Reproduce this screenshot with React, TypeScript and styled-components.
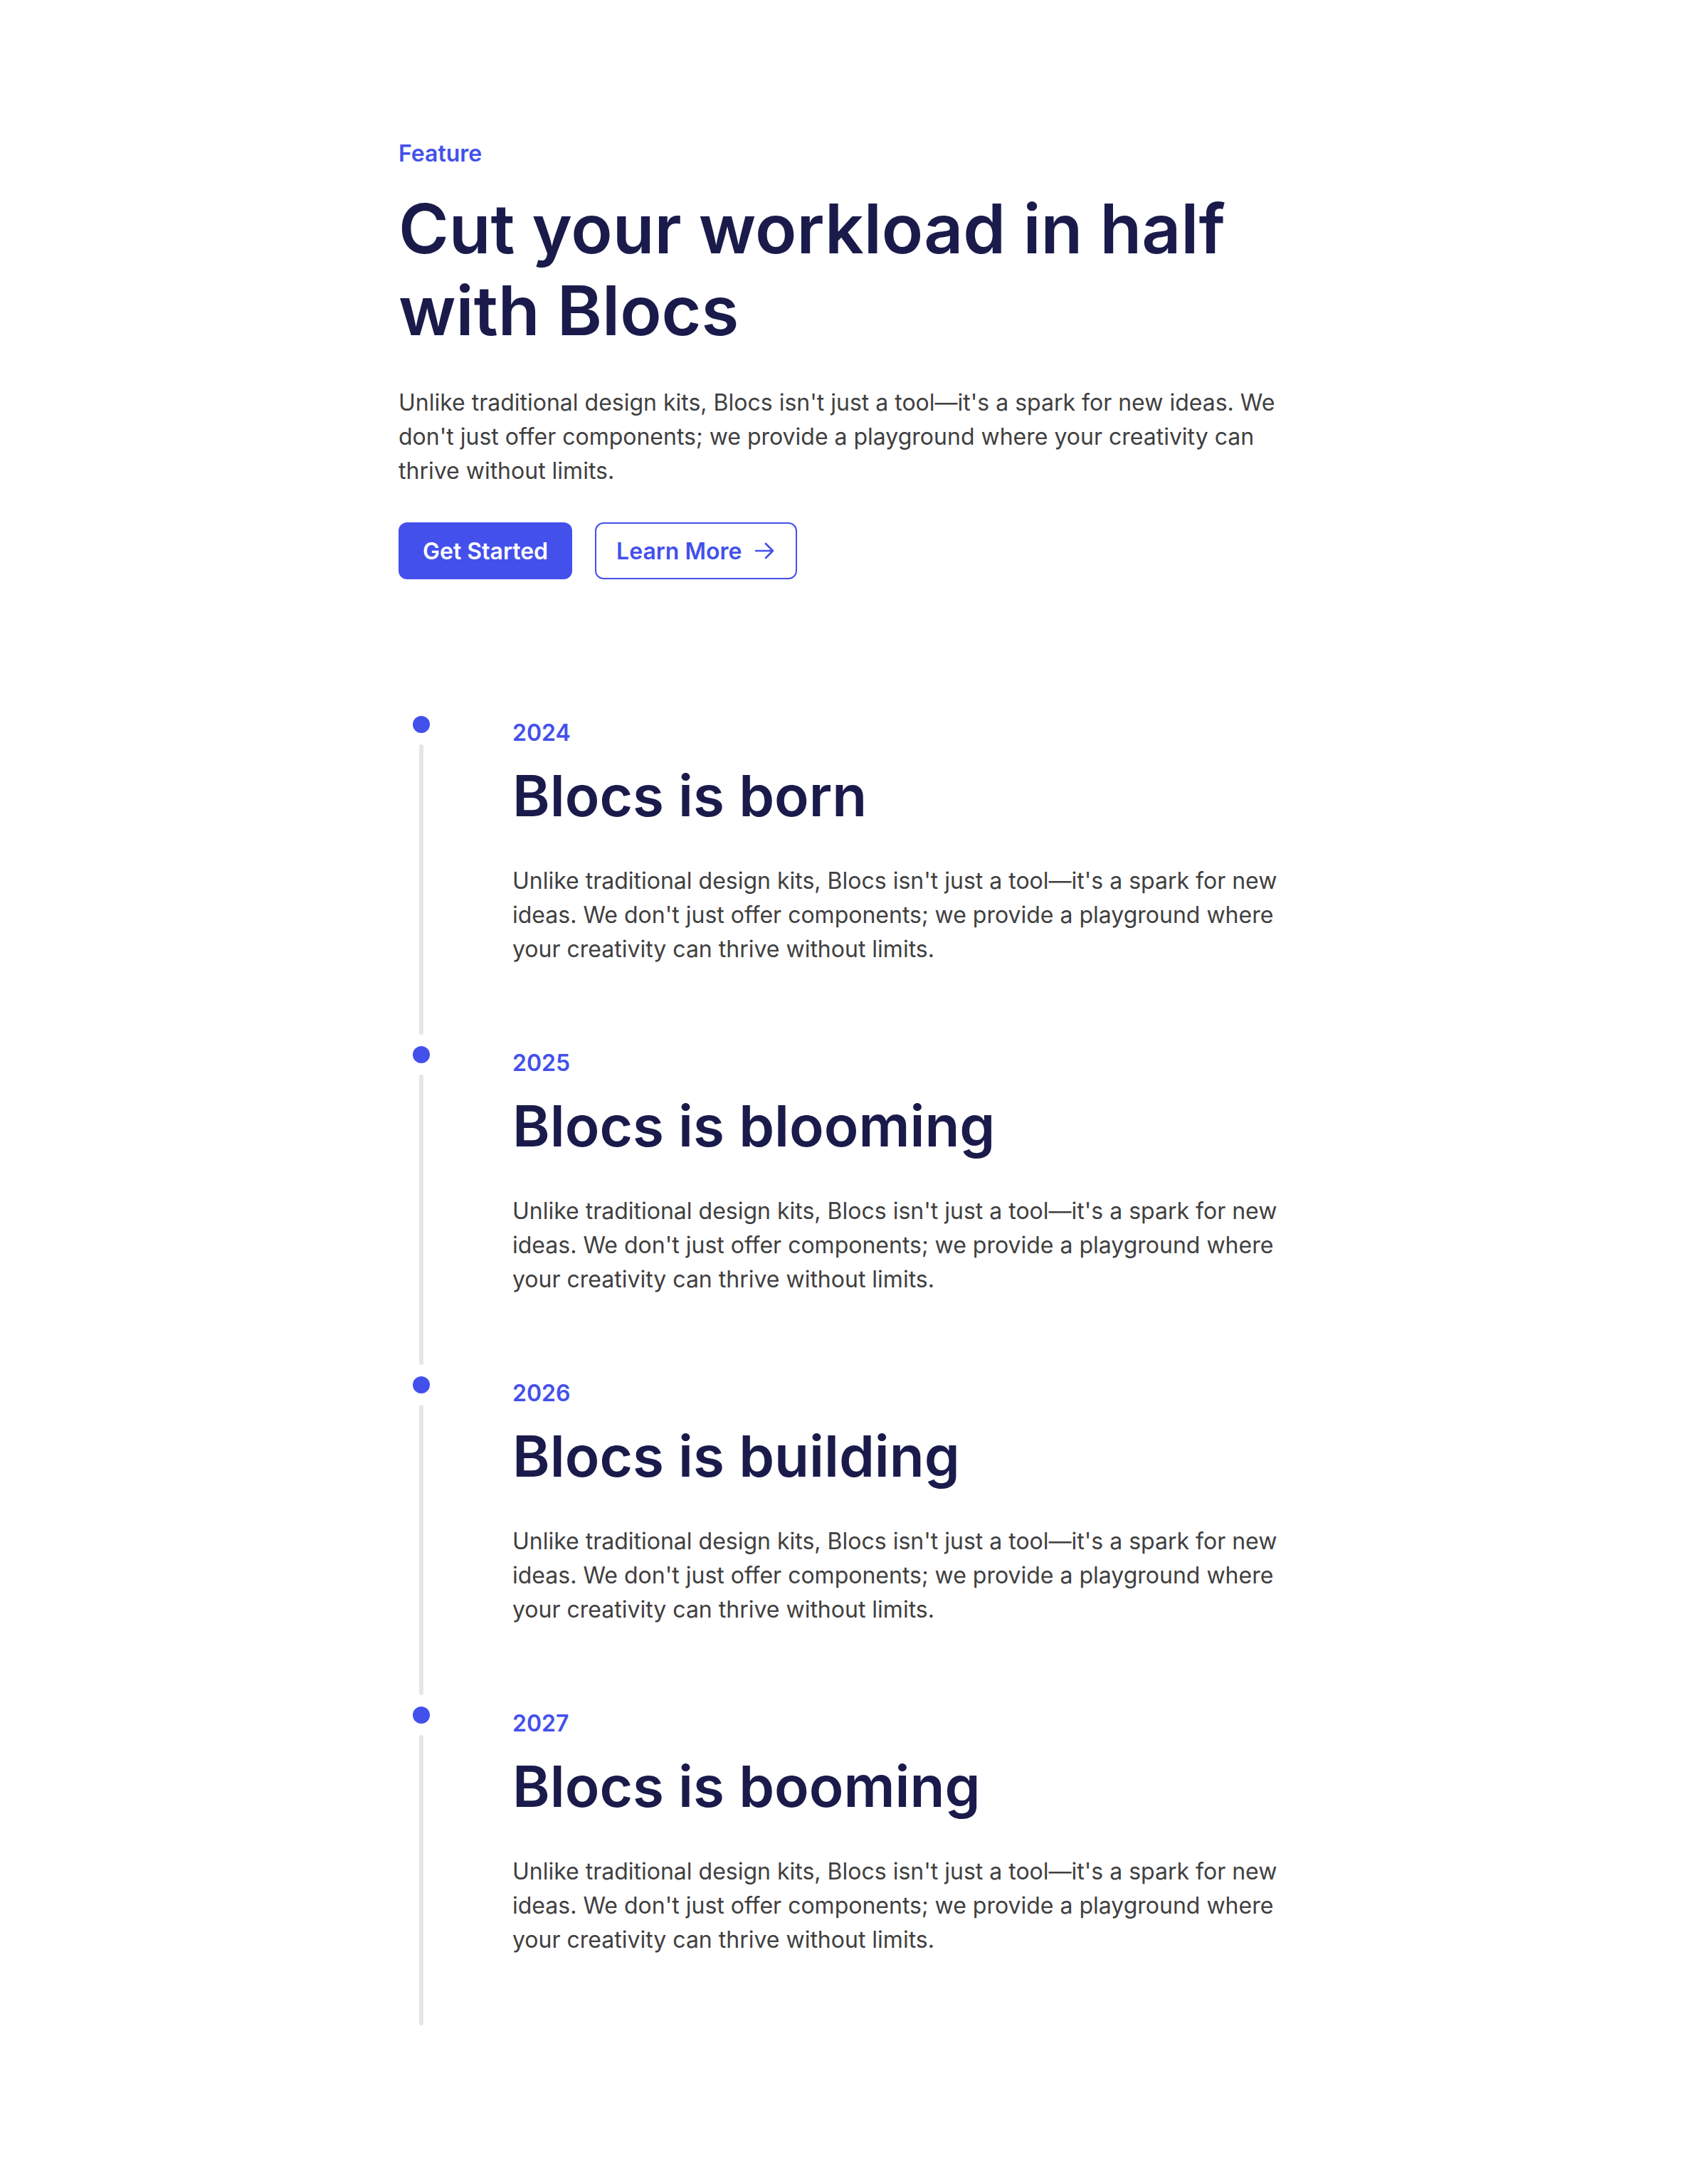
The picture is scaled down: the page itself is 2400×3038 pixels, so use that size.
import React from "react";
import styled, { createGlobalStyle } from "styled-components";

const GlobalStyle = createGlobalStyle`
  html, body {
    margin: 0;
    padding: 0;
    background: #ffffff;
  }
  body {
    font-family: Inter, "Noto Sans", "Liberation Sans", sans-serif;
    -webkit-font-smoothing: antialiased;
  }
  * { box-sizing: border-box; }
`;

const Page = styled.main`
  padding: 192px 0 176px;
`;

const Container = styled.div`
  width: 1280px;
  margin: 0 auto;
`;

const Hero = styled.section`
  display: flex;
  flex-direction: column;
  align-items: flex-start;
`;

const Eyebrow = styled.span`
  font-size: 32px;
  line-height: 48px;
  font-weight: 600;
  color: #4350eb;
`;

const Heading = styled.h1`
  margin: 24px 0 0;
  font-size: 96px;
  line-height: 1.2;
  font-weight: 600;
  color: #1a1b4b;
`;

const Lead = styled.p`
  margin: 48px 0 0;
  font-size: 32px;
  line-height: 48px;
  color: #404040;
`;

const Actions = styled.div`
  display: flex;
  gap: 32px;
  margin-top: 48px;
`;

const Button = styled.button<{ $variant?: "solid" | "outline" }>`
  display: inline-flex;
  align-items: center;
  gap: 16px;
  height: 80px;
  padding: 0 ${(p) => (p.$variant === "outline" ? "28px" : "34px")};
  border-radius: 12px;
  font-family: inherit;
  font-size: 32px;
  font-weight: 600;
  cursor: pointer;
  background: ${(p) => (p.$variant === "outline" ? "#ffffff" : "#4350eb")};
  color: ${(p) => (p.$variant === "outline" ? "#4350eb" : "#ffffff")};
  border: ${(p) => (p.$variant === "outline" ? "2px solid #4350eb" : "none")};
`;

const Timeline = styled.ol`
  list-style: none;
  margin: 192px 0 0;
  padding: 0;
`;

const Item = styled.li`
  display: flex;
  gap: 96px;
`;

const Rail = styled.div`
  width: 64px;
  flex-shrink: 0;
  display: flex;
  flex-direction: column;
  align-items: center;
  padding-bottom: 16px;
`;

const Dot = styled.span`
  width: 24px;
  height: 24px;
  border-radius: 50%;
  background: #4350eb;
`;

const Line = styled.span`
  flex: 1;
  width: 6px;
  margin-top: 16px;
  border-radius: 3px;
  background: #e6e6e6;
`;

const Content = styled.div`
  flex: 1;
  padding-bottom: 112px;
`;

const Year = styled.div`
  font-size: 32px;
  line-height: 48px;
  font-weight: 600;
  color: #4350eb;
`;

const Title = styled.h2`
  margin: 16px 0 0;
  font-size: 80px;
  line-height: 1.2;
  font-weight: 600;
  color: #1a1b4b;
`;

const Body = styled.p`
  margin: 48px 0 0;
  font-size: 32px;
  line-height: 48px;
  color: #404040;
`;

const ArrowRight = () => (
  <svg width="32" height="32" viewBox="0 0 24 24" fill="none" stroke="currentColor" strokeWidth={2} strokeLinecap="round" strokeLinejoin="round">
    <path d="M13.5 4.5 21 12m0 0-7.5 7.5M21 12H3" />
  </svg>
);

const copy =
  "Unlike traditional design kits, Blocs isn't just a tool\u2014it's a spark for new ideas. We don't just offer components; we provide a playground where your creativity can thrive without limits.";

const milestones = [
  { year: "2024", title: "Blocs is born" },
  { year: "2025", title: "Blocs is blooming" },
  { year: "2026", title: "Blocs is building" },
  { year: "2027", title: "Blocs is booming" },
];

export default function App() {
  return (
    <>
      <GlobalStyle />
      <Page>
        <Container>
          <Hero>
            <Eyebrow>Feature</Eyebrow>
            <Heading>
              Cut your workload in half
              <br />
              with Blocs
            </Heading>
            <Lead>{copy}</Lead>
            <Actions>
              <Button>Get Started</Button>
              <Button $variant="outline">
                Learn More
                <ArrowRight />
              </Button>
            </Actions>
          </Hero>

          <Timeline>
            {milestones.map((m) => (
              <Item key={m.year}>
                <Rail>
                  <Dot />
                  <Line />
                </Rail>
                <Content>
                  <Year>{m.year}</Year>
                  <Title>{m.title}</Title>
                  <Body>{copy}</Body>
                </Content>
              </Item>
            ))}
          </Timeline>
        </Container>
      </Page>
    </>
  );
}
